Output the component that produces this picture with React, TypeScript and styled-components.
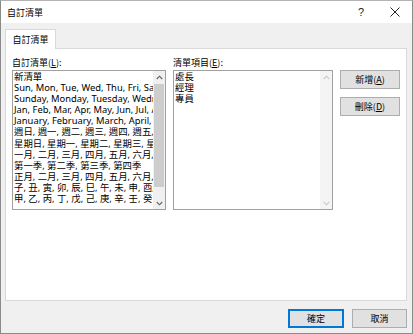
import React from "react";
import styled, { createGlobalStyle } from "styled-components";

const Global = createGlobalStyle`
  html, body { margin: 0; padding: 0; background: #fff; }
  * { box-sizing: border-box; }
  body { font-family: "Noto Sans CJK TC", "Liberation Sans", sans-serif; font-size: 9px; color: #000; }
`;

const Window = styled.div`
  width: 413px;
  height: 334px;
  display: flex;
  flex-direction: column;
  border: 1px solid #8a8a8a;
  border-top-color: #b4b4b4;
  background: #f0f0f0;
`;

const TitleBar = styled.div`
  height: 22px;
  background: #fff;
  display: flex;
  align-items: center;
  padding-left: 6px;
`;

const Title = styled.div`
  flex: 1;
  font-size: 9px;
`;

const TitleBtn = styled.div`
  width: 34px;
  height: 22px;
  display: flex;
  align-items: center;
  justify-content: center;
  font-family: "Liberation Sans", sans-serif;
  font-size: 11px;
  color: #222;
`;

const Body = styled.div`
  flex: 1;
  display: flex;
  flex-direction: column;
  padding: 6px 5px 0 4px;
`;

const TabStrip = styled.div`
  display: flex;
  height: 19px;
`;

const Tab = styled.div`
  width: 51px;
  height: 20px;
  background: #fff;
  border: 1px solid #d9d9d9;
  border-bottom: none;
  display: flex;
  align-items: center;
  justify-content: center;
  position: relative;
  z-index: 1;
`;

const Panel = styled.div`
  height: 253px;
  background: #fff;
  border: 1px solid #d9d9d9;
  display: flex;
  gap: 7px;
  padding: 8px 0 0 6px;
`;

const Column = styled.div<{ $w: number }>`
  width: ${(p) => p.$w}px;
  display: flex;
  flex-direction: column;
`;

const Label = styled.div`
  height: 13px;
  line-height: 12px;
`;

const U = styled.span`
  text-decoration: underline;
`;

const ListBox = styled.div`
  height: 140px;
  border: 1px solid #a0a0a0;
  background: #fff;
  display: flex;
`;

const ListItems = styled.div`
  flex: 1;
  overflow: hidden;
  padding: 0 0 0 1px;
  white-space: nowrap;
  line-height: 11.1px;
  font-size: 9.4px;
  font-family: "Noto Sans", "Noto Sans CJK TC", sans-serif;
`;

const Item = styled.div`
  height: 11.1px;
`;

const ScrollBar = styled.div<{ $disabled?: boolean }>`
  width: 12px;
  display: flex;
  flex-direction: column;
  background: ${(p) => (p.$disabled ? "#f4f4f4" : "#f0f0f0")};
`;

const Arrow = styled.div<{ $disabled?: boolean }>`
  height: 12px;
  display: flex;
  align-items: center;
  justify-content: center;
  color: ${(p) => (p.$disabled ? "#c8c8c8" : "#606060")};
`;

const Track = styled.div`
  flex: 1;
  display: flex;
  flex-direction: column;
  padding: 1px 0 0;
`;

const Thumb = styled.div`
  height: 103px;
  margin: 0 1px;
  background: #cdcdcd;
`;

const ButtonCol = styled.div`
  display: flex;
  flex-direction: column;
  gap: 8px;
  padding-top: 13px;
`;

const Btn = styled.div<{ $w?: number; $default?: boolean }>`
  width: ${(p) => p.$w ?? 60}px;
  height: 19px;
  background: #e1e1e1;
  border: 1px solid ${(p) => (p.$default ? "#0078d7" : "#adadad")};
  box-shadow: ${(p) => (p.$default ? "inset 0 0 0 1px #0078d7" : "none")};
  display: flex;
  align-items: center;
  justify-content: center;
  font-size: 9px;
`;

const Footer = styled.div`
  display: flex;
  justify-content: flex-end;
  gap: 8px;
  padding-top: 8px;
`;

const Chevron = ({ up }: { up?: boolean }) => (
  <svg width="7" height="5" viewBox="0 0 7 5">
    <path
      d={up ? "M0.8 4 L3.5 1.2 L6.2 4" : "M0.8 1 L3.5 3.8 L6.2 1"}
      fill="none"
      stroke="currentColor"
      strokeWidth="1.1"
    />
  </svg>
);

const leftItems = [
  "新清單",
  "Sun, Mon, Tue, Wed, Thu, Fri, Sat",
  "Sunday, Monday, Tuesday, Wednesday, Thursday, Friday, Saturday",
  "Jan, Feb, Mar, Apr, May, Jun, Jul, Aug, Sep, Oct, Nov, Dec",
  "January, February, March, April, May, June, July, August",
  "週日, 週一, 週二, 週三, 週四, 週五, 週六",
  "星期日, 星期一, 星期二, 星期三, 星期四, 星期五, 星期六",
  "一月, 二月, 三月, 四月, 五月, 六月, 七月, 八月",
  "第一季, 第二季, 第三季, 第四季",
  "正月, 二月, 三月, 四月, 五月, 六月, 七月, 八月",
  "子, 丑, 寅, 卯, 辰, 巳, 午, 未, 申, 酉, 戌, 亥",
  "甲, 乙, 丙, 丁, 戊, 己, 庚, 辛, 壬, 癸",
];

const rightItems = ["處長", "經理", "專員"];

export default function App() {
  return (
    <>
      <Global />
      <Window>
        <TitleBar>
          <Title>自訂清單</Title>
          <TitleBtn>?</TitleBtn>
          <TitleBtn>
            <svg width="10" height="10" viewBox="0 0 10 10">
              <path d="M0.5 0.5 L9.5 9.5 M9.5 0.5 L0.5 9.5" stroke="#222" strokeWidth="1" />
            </svg>
          </TitleBtn>
        </TitleBar>
        <Body>
          <TabStrip>
            <Tab>自訂清單</Tab>
          </TabStrip>
          <Panel>
            <Column $w={154}>
              <Label>
                自訂清單(<U>L</U>):
              </Label>
              <ListBox>
                <ListItems>
                  {leftItems.map((t) => (
                    <Item key={t}>{t}</Item>
                  ))}
                </ListItems>
                <ScrollBar>
                  <Arrow>
                    <Chevron up />
                  </Arrow>
                  <Track>
                    <Thumb />
                  </Track>
                  <Arrow>
                    <Chevron />
                  </Arrow>
                </ScrollBar>
              </ListBox>
            </Column>
            <Column $w={160}>
              <Label>
                清單項目(<U>E</U>):
              </Label>
              <ListBox>
                <ListItems>
                  {rightItems.map((t) => (
                    <Item key={t}>{t}</Item>
                  ))}
                </ListItems>
                <ScrollBar $disabled>
                  <Arrow $disabled>
                    <Chevron up />
                  </Arrow>
                  <Track />
                  <Arrow $disabled>
                    <Chevron />
                  </Arrow>
                </ScrollBar>
              </ListBox>
            </Column>
            <ButtonCol>
              <Btn>
                新增(<U>A</U>)
              </Btn>
              <Btn>
                刪除(<U>D</U>)
              </Btn>
            </ButtonCol>
          </Panel>
          <Footer>
            <Btn $w={56} $default>
              確定
            </Btn>
            <Btn $w={55}>取消</Btn>
          </Footer>
        </Body>
      </Window>
    </>
  );
}
